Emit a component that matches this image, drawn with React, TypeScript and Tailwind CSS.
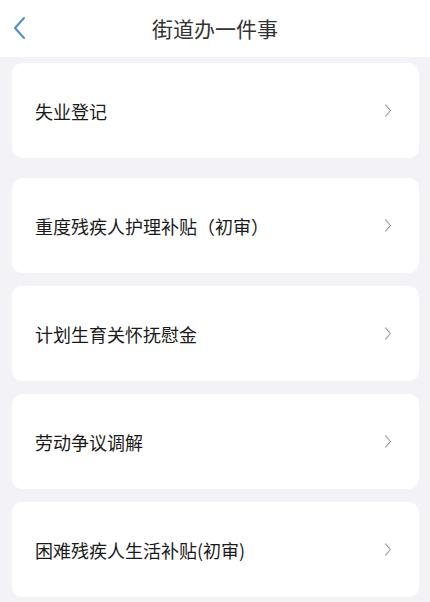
import React from 'react';

const items = [
  '失业登记',
  '重度残疾人护理补贴（初审）',
  '计划生育关怀抚慰金',
  '劳动争议调解',
  '困难残疾人生活补贴(初审)',
];

function Chevron({ className }: { className?: string }) {
  return (
    <svg viewBox="0 0 10 18" className={className} fill="none" stroke="currentColor" strokeWidth="1.4" strokeLinecap="round" strokeLinejoin="round">
      <path d="M2 2l6 7-6 7" />
    </svg>
  );
}

export default function App() {
  const font = { fontFamily: '"Noto Sans CJK SC", "Noto Sans", sans-serif' };
  return (
    <div className="w-[430px] h-[602px] bg-[#f3f3f7] overflow-hidden" style={font}>
      <div className="h-[57px] bg-white flex items-center relative">
        <svg viewBox="0 0 14 24" className="absolute left-[13px] top-[16px] w-[14px] h-[24px] text-[#4a8fd6]" fill="none" stroke="currentColor" strokeWidth="2" strokeLinecap="round" strokeLinejoin="round">
          <path d="M11 2L2 12l9 10" />
        </svg>
        <h1 className="w-full text-center text-[21px] text-[#333] leading-none -mt-[1px]">街道办一件事</h1>
      </div>

      <div className="flex flex-col gap-[13px] px-[12px] pt-[6px] pr-[11px]">
        {items.map((t, i) => (
          <div
            key={t}
            className={`h-[95px] bg-white rounded-[10px] flex items-center justify-between pl-[23px] pr-[27px] ${i === 0 ? 'mb-[7px]' : ''}`}
          >
            <span className="text-[18px] text-[#1a1a1a] leading-none">{t}</span>
            <Chevron className="w-[8px] h-[15px] text-[#9a9a9a]" />
          </div>
        ))}
      </div>
    </div>
  );
}
